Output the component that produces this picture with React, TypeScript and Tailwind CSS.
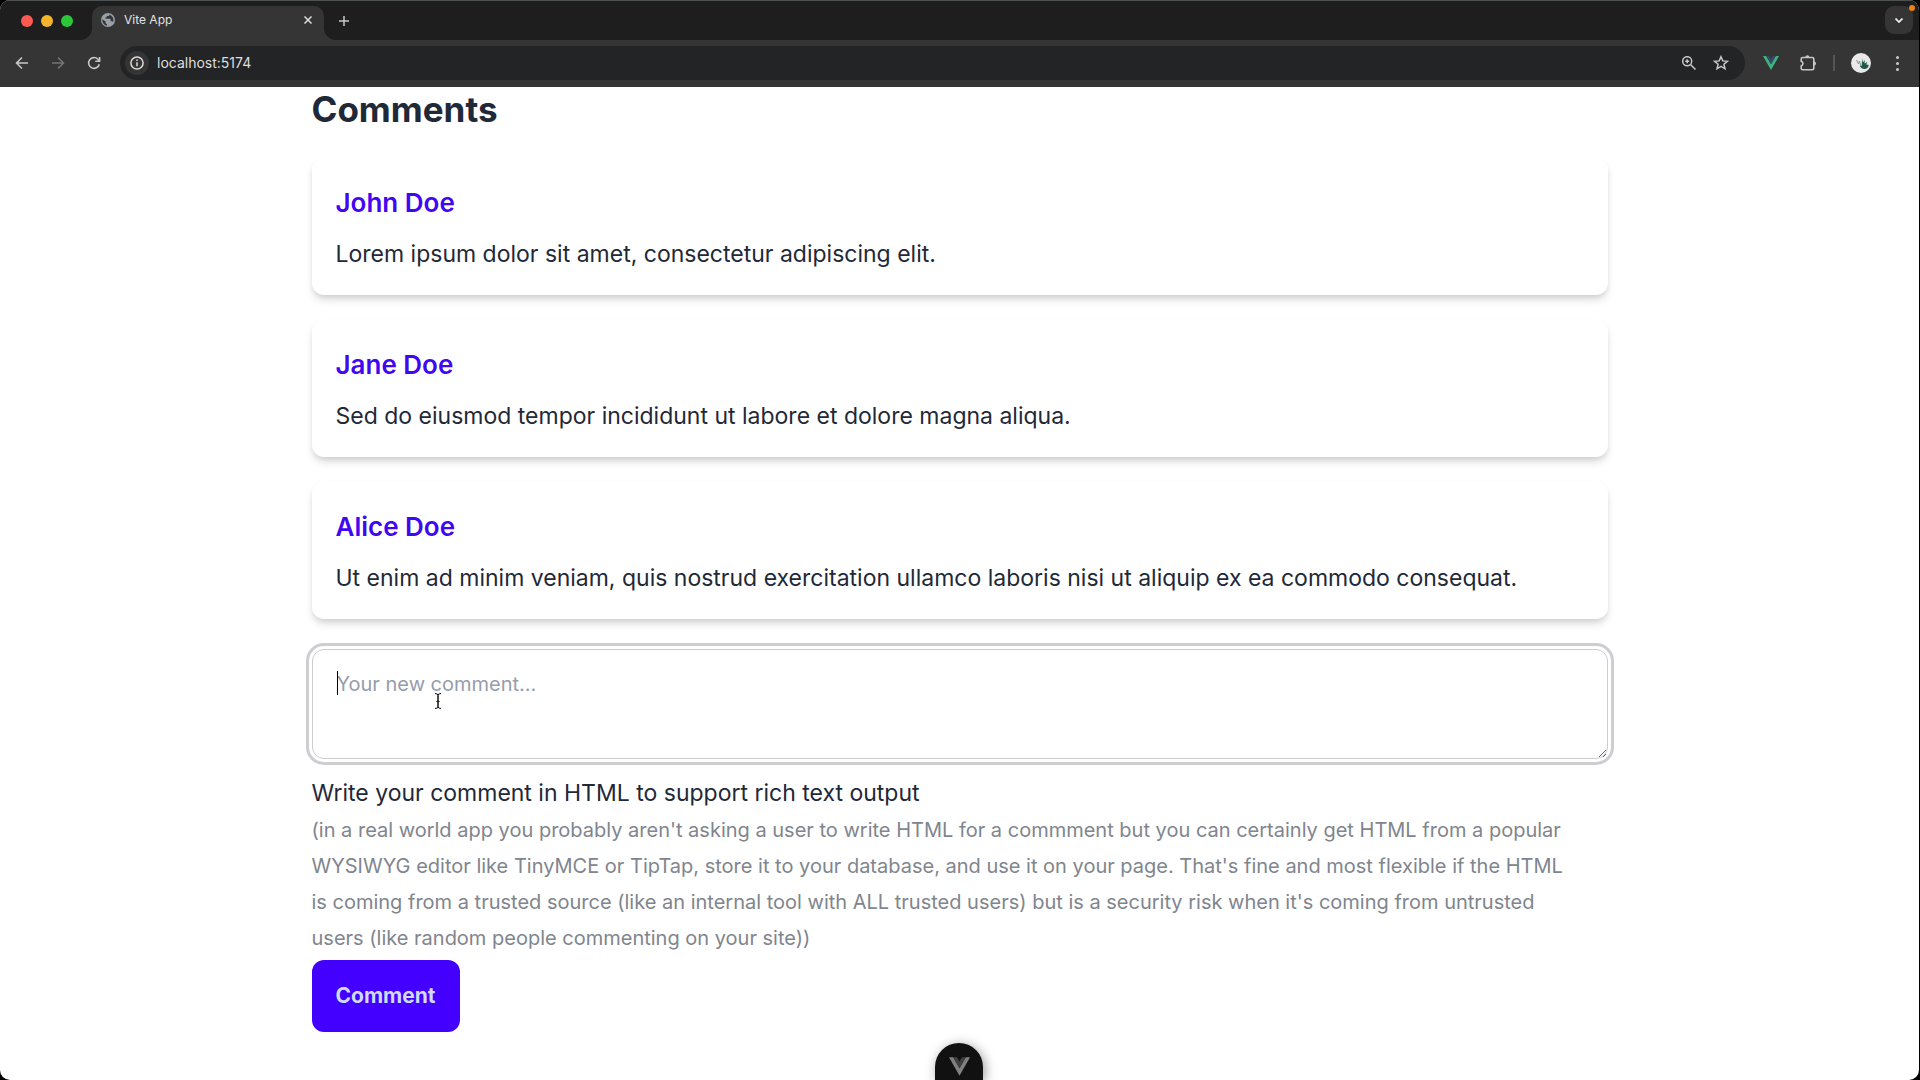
import React from "react";

const comments = [
  { author: "John Doe", text: "Lorem ipsum dolor sit amet, consectetur adipiscing elit." },
  { author: "Jane Doe", text: "Sed do eiusmod tempor incididunt ut labore et dolore magna aliqua." },
  {
    author: "Alice Doe",
    text: "Ut enim ad minim veniam, quis nostrud exercitation ullamco laboris nisi ut aliquip ex ea commodo consequat.",
  },
];

function VueLogo({ outer, inner, className }: { outer: string; inner: string; className: string }) {
  return (
    <svg viewBox="0 0 16 14" className={className} aria-hidden="true">
      <path d="M0 0h3.2L8 8.3 12.8 0H16L8 14z" fill={outer} />
      <path d="M3.2 0H6.2L8 3.1 9.8 0h3L8 8.3z" fill={inner} />
    </svg>
  );
}

function Globe() {
  return (
    <svg viewBox="0 0 14 14" className="size-[14px]" aria-hidden="true">
      <circle cx="7" cy="7" r="7" fill="#9aa0a6" />
      <path
        d="M1.3 6.2 4.6 8.6v1.1c0 .8.6 1.2 1.3 1.2v1.8C3 12.2 1 9.600 1.3 6.200zM8.400 1.500c0 1-.5 1.500-1.400 1.500H5.800v1.300H4.500v1.400h4c.8 0 1.200.500 1.200 1.300v1.200h1c.600 0 1.100.300 1.300.900a5.800 5.800 0 0 0-3.600-7.600z"
        fill="#35363a"
      />
    </svg>
  );
}

function TabStrip() {
  return (
    <div className="flex h-10 items-end border-t border-[#4e5152] bg-[#1e1e1e]">
      <div className="flex h-[39px] w-20 shrink-0 items-center gap-2 pl-[21px]">
        <span className="size-3 rounded-full bg-[#ff5a52]" />
        <span className="size-3 rounded-full bg-[#f6b42c]" />
        <span className="size-3 rounded-full bg-[#2bc63a]" />
      </div>
      <svg viewBox="0 0 12 12" className="size-3 shrink-0" aria-hidden="true">
        <path d="M12 0v12H0A12 12 0 0 0 12 0z" fill="#353535" />
      </svg>
      <div className="flex h-[34px] w-[232px] shrink-0 items-center rounded-t-[10px] bg-[#353535] pb-[6px] pl-[9px] pr-2">
        <Globe />
        <span className="ml-[9px] grow text-[12px] leading-4 text-[#e3e3e3]">Vite App</span>
        <button aria-label="Close tab" className="flex size-4 items-center justify-center">
          <svg viewBox="0 0 8 8" className="size-2" stroke="#dedede" strokeWidth="1.500" aria-hidden="true">
            <path d="M.5.5l7 7M7.500.5l-7 7" />
          </svg>
        </button>
      </div>
      <svg viewBox="0 0 12 12" className="size-3 shrink-0" aria-hidden="true">
        <path d="M0 0v12h12A12 12 0 0 1 0 0z" fill="#353535" />
      </svg>
      <button aria-label="New tab" className="flex h-[39px] w-4 items-center justify-center">
        <svg viewBox="0 0 10 10" className="size-[10px] shrink-0" stroke="#c7c7c7" strokeWidth="1.500" aria-hidden="true">
          <path d="M5 0v10M0 5h10" />
        </svg>
      </button>
      <div className="relative mb-[6px] ml-auto mr-[6px]">
        <button aria-label="Search tabs" className="flex size-7 items-center justify-center rounded-[9px] bg-[#353535]">
          <svg viewBox="0 0 8 5" className="h-[5px] w-2" fill="none" stroke="#f1f1f1" strokeWidth="1.700" aria-hidden="true">
            <path d="M.5.5 4 4 7.500.5" />
          </svg>
        </button>
        <span className="absolute -right-[2px] -top-[1px] size-[6px] rounded-full bg-[#f0820f]" />
      </div>
    </div>
  );
}

function Toolbar() {
  return (
    <div className="flex h-[47px] items-center bg-[#353535] pb-[1px] pl-[15px] pr-5">
      <button aria-label="Back" className="flex w-[14px] justify-center">
        <svg viewBox="0 0 14 14" className="size-[14px]" fill="none" stroke="#c7c7c7" strokeWidth="1.600" aria-hidden="true">
          <path d="M13 7H2M7 1.500 1.500 7 7 12.500" />
        </svg>
      </button>
      <button aria-label="Forward" className="ml-[22px] flex w-[14px] justify-center">
        <svg viewBox="0 0 14 14" className="size-[14px]" fill="none" stroke="#747474" strokeWidth="1.600" aria-hidden="true">
          <path d="M1 7h11M7 1.500 12.500 7 7 12.500" />
        </svg>
      </button>
      <button aria-label="Reload" className="ml-[22px] flex w-[14px] justify-center">
        <svg viewBox="0 0 14 14" className="size-[14px]" fill="none" stroke="#c7c7c7" strokeWidth="1.600" aria-hidden="true">
          <path d="M12.300 8.200A5.400 5.400 0 1 1 11 3.300l1.300 1.300M12.600 1v4.300H8.300" />
        </svg>
      </button>
      <div className="ml-[19px] flex h-[34px] min-w-0 grow items-center rounded-full bg-[#232425] pl-[5px] pr-4">
        <button aria-label="Site information" className="flex size-6 shrink-0 items-center justify-center rounded-full bg-[#353535]">
          <svg viewBox="0 0 14 14" className="size-[14px]" fill="none" stroke="#dcdcdc" strokeWidth="1.500" aria-hidden="true">
            <circle cx="7" cy="7" r="6.100" />
            <path d="M7 6.200v4.100M7 3.500v1.600" />
          </svg>
        </button>
        <input
          aria-label="Address"
          defaultValue="localhost:5174"
          className="ml-2 min-w-0 grow bg-transparent text-[14px] leading-5 text-[#dedede] outline-none"
        />
        <button aria-label="Zoom" className="flex size-4 items-center justify-center">
          <svg viewBox="0 0 14 14" className="size-[14px]" fill="none" stroke="#c7c7c7" strokeWidth="1.500" aria-hidden="true">
            <circle cx="5.200" cy="5.200" r="4.500" />
            <path d="m8.500 8.500 5 5M5.200 3.200v4M3.200 5.200h4" />
          </svg>
        </button>
        <button aria-label="Bookmark this tab" className="ml-4 flex size-4 items-center justify-center">
          <svg viewBox="0 0 16 16" className="size-4" fill="none" stroke="#c7c7c7" strokeWidth="1.500" aria-hidden="true">
            <path d="m8 1.700 1.800 4.200 4.600.4-3.500 3 1.100 4.500L8 11.400l-4 2.400 1.100-4.500-3.500-3 4.600-.4z" />
          </svg>
        </button>
      </div>
      <button aria-label="Vue devtools" className="ml-[18px] flex w-4 justify-center">
        <VueLogo outer="#3fb37f" inner="#354a67" className="h-[14px] w-4" />
      </button>
      <button aria-label="Extensions" className="ml-5 flex w-[18px] justify-center">
        <svg viewBox="0 0 18 18" className="size-[18px]" aria-hidden="true">
          <path
            d="M3.700 3.500h9.600q1.500 0 1.500 1.500v9.300q0 1.500-1.500 1.500H3.700q-1.500 0-1.500-1.500v-2.400a2.400 2.400 0 0 0 0-4.600V5q0-1.500 1.500-1.500z"
            fill="none"
            stroke="#c7c7c7"
            strokeWidth="1.600"
          />
          <path d="M6.400 3.200a2 2 0 0 1 4 0zM15 7.600a2 2 0 0 1 0 4z" fill="#c7c7c7" />
        </svg>
      </button>
      <span className="ml-4 h-4 w-[2px] bg-[#555]" />
      <button aria-label="Profile" className="ml-4 flex size-5 items-center justify-center rounded-full bg-[#e9e9ea]">
        <svg viewBox="0 0 20 20" className="size-5" aria-hidden="true">
          <path d="m5.500 7 2 4 1-3 1.500 5" fill="none" stroke="#8b9494" />
          <path d="m11 5 .8 4.500 2-2.500-.3 3.500 2.800-1.500-1 2.500 2.500.5c-.5 2.500-2 4-4.500 4-2 0-4-1.200-4.500-3.500l2 .5z" fill="#23584c" />
        </svg>
      </button>
      <button aria-label="Menu" className="ml-6 flex w-1 flex-col items-center gap-[3px]">
        <span className="size-[3px] rounded-full bg-[#c7c7c7]" />
        <span className="size-[3px] rounded-full bg-[#c7c7c7]" />
        <span className="size-[3px] rounded-full bg-[#c7c7c7]" />
      </button>
    </div>
  );
}

function CommentCard({ author, text }: { author: string; text: string }) {
  return (
    <article className="rounded-xl bg-white px-6 pb-[23px] pt-[25px] shadow-[0_6px_9px_-1px_rgba(0,0,0,0.12),0_3px_6px_-2px_rgba(0,0,0,0.12)]">
      <h2 className="text-[26px] font-semibold leading-[42px] text-[#4106f2]">{author}</h2>
      <p className="mt-3 text-[23px] leading-9">{text}</p>
    </article>
  );
}

function CommentForm() {
  return (
    <form className="mt-[30px]" onSubmit={(e) => e.preventDefault()}>
      <div className="relative">
        <textarea
          id="new-comment"
          aria-label="Your new comment"
          placeholder="Your new comment..."
          className="block h-[110px] w-full rounded-xl border border-[#cccccf] px-6 py-[13px] text-[20px] leading-[42px] caret-transparent outline-[3px] outline-offset-[3px] outline-[#cdcdd2] placeholder:text-[#959dab] outline-solid"
        />
        <span className="absolute left-[25px] top-[22px] h-6 w-px bg-black" />
        <svg viewBox="0 0 8 18" className="absolute left-[122px] top-[43px] h-[18px] w-2" fill="none" stroke="#111" aria-hidden="true">
          <path d="M1 1.500q3 0 3 2v11q0 2-3 2M7 1.500q-3 0-3 2v11q0 2 3 2M2.500 9.500h3" />
        </svg>
      </div>
      <label htmlFor="new-comment" className="mt-4 block text-[23px] leading-[37px]">
        Write your comment in HTML to support rich text output
      </label>
      <p className="text-[20px] leading-9 text-[#80858e]">
        (in a real world app you probably aren't asking a user to write HTML for a commment but you can certainly get
        HTML from a popular
        <br />
        WYSIWYG editor like TinyMCE or TipTap, store it to your database, and use it on your page. That's fine and most
        flexible if the HTML
        <br />
        is coming from a trusted source (like an internal tool with ALL trusted users) but is a security risk when it's
        coming from untrusted
        <br />
        users (like random people commenting on your site))
      </p>
      <button type="submit" className="mt-1 h-[72px] rounded-xl bg-[#4400ff] px-6 text-[21px] font-bold leading-6 text-[#d0dafb]">
        Comment
      </button>
    </form>
  );
}

export default function App() {
  return (
    <div className="min-h-screen bg-black pr-px font-['Inter',sans-serif]">
      <div className="flex min-h-screen flex-col overflow-hidden rounded-[10px] bg-white">
        <header>
          <TabStrip />
          <Toolbar />
        </header>
        <main className="mx-auto w-full max-w-[1296px] text-[#1f2937]">
          <h1 className="text-[35px] font-bold leading-[44px]">Comments</h1>
          <section className="mt-[26px] flex flex-col gap-6">
            {comments.map((c) => (
              <CommentCard key={c.author} author={c.author} text={c.text} />
            ))}
          </section>
          <CommentForm />
        </main>
      </div>
      <button
        aria-label="Toggle Vue devtools"
        className="fixed bottom-0 left-0 right-[2px] mx-auto flex h-[37px] w-12 justify-center rounded-t-full bg-[#111] pt-[14px] shadow-[2px_2px_12px_rgba(0,0,0,0.4)]"
      >
        <VueLogo outer="#808080" inner="#404040" className="h-[19px] w-[21px]" />
      </button>
    </div>
  );
}
